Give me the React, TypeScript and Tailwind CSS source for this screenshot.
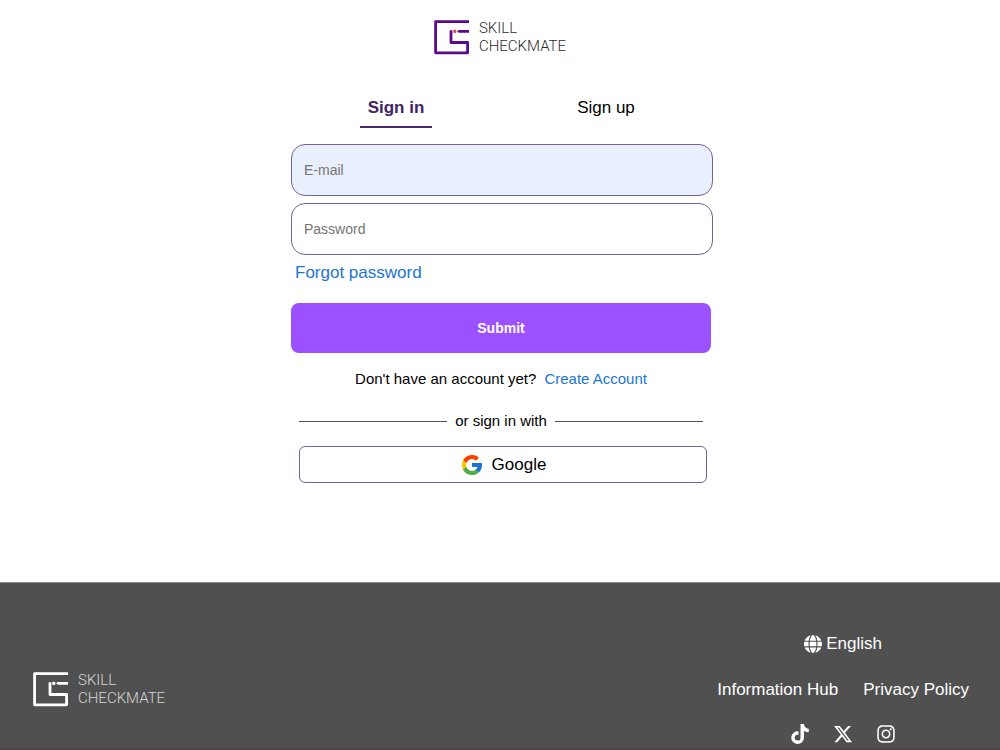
import { FaGlobe, FaInstagram, FaTiktok, FaXTwitter } from "react-icons/fa6";
import { FcGoogle } from "react-icons/fc";

function Logo({ inverted = false }: { inverted?: boolean }) {
  return (
    <div
      className={`flex items-center gap-[10px] ${inverted ? "text-[#d6d6d6]" : "text-[#2c2c2c]"}`}
    >
      <svg width="35" height="35" viewBox="0 0 35 35" fill="none" aria-hidden="true">
        <g stroke={inverted ? "#ffffff" : "#5b0a8c"} strokeWidth="2.8">
          <path d="M35 1.600H1.600V32.800H33.600V22.500H17V10.200" strokeLinejoin="round" />
          <path d="M25 11.300H34.500" strokeLinecap="round" />
        </g>
        <rect x="19.200" y="9.700" width="3.200" height="3.200" rx="1.200" fill={inverted ? "#ffffff" : "#e8433a"} />
      </svg>
      <div className="font-['Roboto',sans-serif] text-[15px] leading-[18px] font-light">
        <div>SKILL</div>
        <div>CHECKMATE</div>
      </div>
    </div>
  );
}

export default function App() {
  return (
    <div className="bg-white font-['Liberation_Sans',Arial,sans-serif] text-[17px] leading-5 text-black">
      <header className="flex justify-center pt-[19px]">
        <Logo />
      </header>

      <main className="flex justify-center pt-[35px] pb-[99px] pl-1">
        <form className="w-full max-w-[422px]" onSubmit={(e) => e.preventDefault()}>
          <div className="mr-[2px] grid grid-cols-2 justify-items-center">
            <button
              type="button"
              className="border-b-2 border-[#4b2a6b] px-2 pt-2 pb-2 leading-5 font-bold text-[#3f2463]"
            >
              Sign in
            </button>
            <button type="button" className="border-b-2 border-transparent px-2 pt-2 pb-2 leading-5">
              Sign up
            </button>
          </div>

          <div className="mt-4 flex flex-col gap-[7px]">
            <input
              type="email"
              aria-label="E-mail"
              placeholder="E-mail"
              className="h-[52px] w-full rounded-[14px] border border-[#75629a] bg-[#e8effd] px-3 text-[14px] placeholder:text-[#757575]"
            />
            <input
              type="password"
              aria-label="Password"
              placeholder="Password"
              className="h-[52px] w-full rounded-[14px] border border-[#75629a] bg-white px-3 text-[14px] placeholder:text-[#757575]"
            />
          </div>

          <div className="mt-2 pl-1">
            <a href="#forgot" className="text-[#1b76d2]">
              Forgot password
            </a>
          </div>

          <div className="mt-5 mr-[2px]">
            <button
              type="submit"
              className="h-[50px] w-full rounded-lg bg-[#9b51ff] text-[14px] font-bold text-white"
            >
              Submit
            </button>
          </div>

          <p className="mt-4 mr-[2px] flex justify-center gap-2 text-[15px]">
            <span>Don't have an account yet?</span>
            <a href="#signup" className="text-[#1b76d2]">
              Create Account
            </a>
          </p>

          <div className="mt-[22px] mr-[10px] ml-2 flex items-center gap-2 text-[15px]">
            <span className="h-px flex-1 bg-[#555555]" />
            <span>or sign in with</span>
            <span className="h-px flex-1 bg-[#555555]" />
          </div>

          <div className="mt-[15px] mr-[6px] ml-2">
            <button
              type="button"
              className="flex h-[37px] w-full items-center justify-center gap-2 rounded-md border border-[#75629a]"
            >
              <FcGoogle size={24} />
              Google
            </button>
          </div>
        </form>
      </main>

      <footer className="flex items-center justify-between border-t border-b-2 border-t-[#8a8a8a] border-b-[#4b464a] bg-[#505050] pt-[51px] pr-[31px] pb-1 pl-[33px] text-white">
        <Logo inverted />
        <div className="flex flex-col items-center">
          <a href="#language" className="flex items-center gap-1">
            <FaGlobe size={18} />
            English
          </a>
          <nav className="mt-[26px] flex gap-[25px]">
            <a href="#hub">Information Hub</a>
            <a href="#privacy">Privacy Policy</a>
          </nav>
          <div className="mt-6 flex items-center gap-[25px]">
            <a href="#tiktok" aria-label="TikTok" className="flex w-[18px] justify-center">
              <FaTiktok size={20} />
            </a>
            <a href="#x" aria-label="X" className="flex w-[18px] justify-center">
              <FaXTwitter size={20} className="shrink-0" />
            </a>
            <a href="#instagram" aria-label="Instagram" className="flex w-[18px] justify-center">
              <FaInstagram size={20} className="shrink-0" />
            </a>
          </div>
        </div>
      </footer>
    </div>
  );
}
